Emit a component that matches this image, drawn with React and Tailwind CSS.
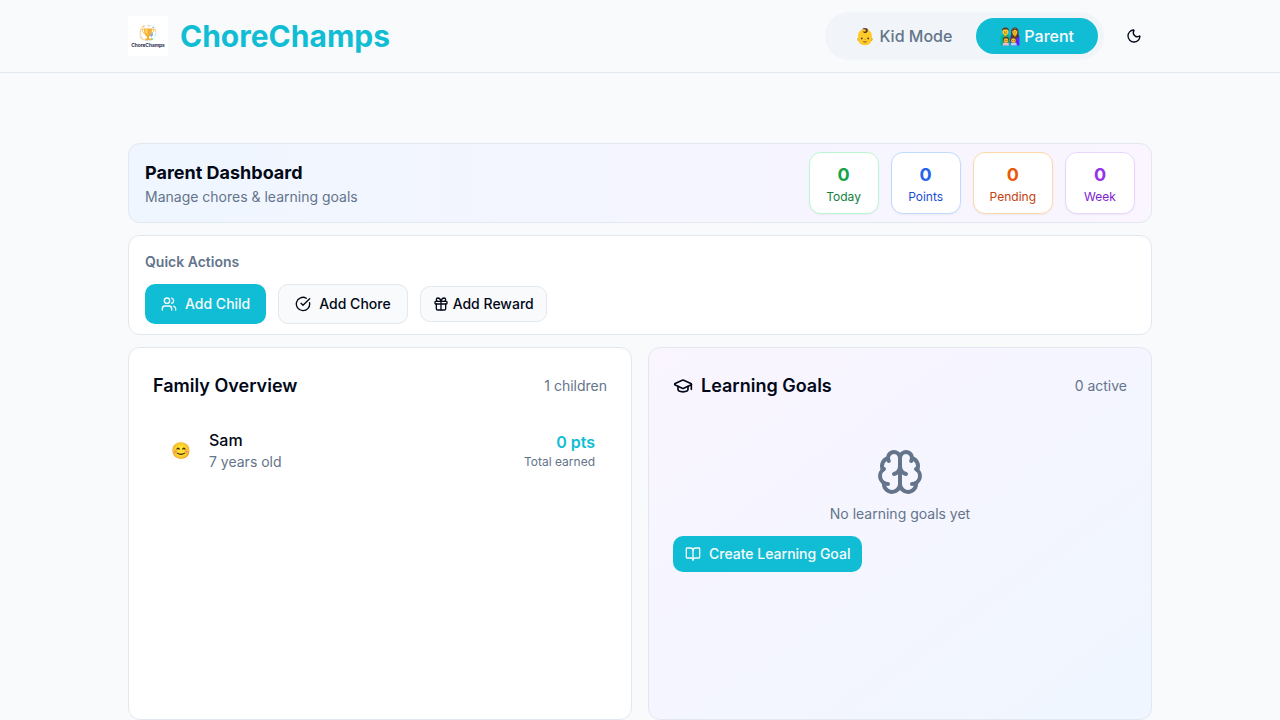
import React from "react";
import { Moon, Users, CircleCheckBig, Gift, GraduationCap, Brain, BookOpen } from "lucide-react";

function Logo() {
  return (
    <svg viewBox="0 0 40 40" className="size-10" role="img" aria-label="ChoreChamps logo">
      <rect width="40" height="40" fill="#ffffff" />
      <circle cx="20" cy="17" r="7.8" fill="none" stroke="#b5daee" strokeWidth="0.8" strokeDasharray="4 2" />
      <path d="M12 16a8 8 0 0 1 3-5M28 16a8 8 0 0 0-2-4M12 20a8 8 0 0 0 4 4" fill="none" stroke="#fad596" strokeWidth="1.2" />
      <path d="M16.5 13.5h-2.3c0 2.6 1 3.8 3 4M23.5 13.5h2.3c0 2.6-1 3.8-3 4" fill="none" stroke="#f8c15c" strokeWidth="1" />
      <path d="M16 12.5h8c0 4.8-1 7.4-3 8.2v1.8h1.8v1.8h-5.6v-1.8h1.8v-1.8c-2-.8-3-3.4-3-8.2z" fill="#f9ae30" />
      <path d="M17.2 13.5h2.2v5.4c-1.3-.8-2.1-2.8-2.2-5.4z" fill="#ffdb80" />
      <path d="M22 19l2.4-3 .8 3-2.2 2.4z" fill="#7fb4dc" />
      <circle cx="23.8" cy="23" r="1.1" fill="#8ccb78" />
      <circle cx="15.5" cy="10.6" r="1" fill="#fbc766" />
      <circle cx="20.5" cy="9.8" r="0.9" fill="#fbd592" />
      <circle cx="25" cy="11.4" r="0.9" fill="#8cc6e8" />
      <circle cx="12.3" cy="18" r="0.8" fill="#fbc766" />
      <text x="20" y="30.6" textAnchor="middle" fontFamily="Inter, sans-serif" fontSize="4.8" fontWeight="700" fill="#1f2b50">
        ChoreChamps
      </text>
    </svg>
  );
}

function Family() {
  return (
    <svg viewBox="0 0 20 20" className="size-5" aria-hidden="true">
      <path d="M.6 19.4v-8.2c0-1.8 1.4-2.6 3-2.6h3.6c1.6 0 2.8.8 2.8 2.6v8.2z" fill="#00b594" />
      <path d="M10.4 19.4v-8.2c0-1.8 1.2-2.6 2.8-2.6h3.4c1.6 0 2.8 1 2.8 2.6v8.2z" fill="#651fff" />
      <path d="M10.8 10.6c.6-1 .3-2.4.3-4.6 0-2.8 1.6-4.4 3.8-4.4s3.8 1.6 3.8 4.4c0 2.2-.2 3.8.3 5.2-1.4 1.4-6.8 1.2-8.2-.6z" fill="#543930" />
      <path d="M4 7.6h2.6v3H4zM13.6 7.6h2.6v3h-2.6z" fill="#e59600" />
      <ellipse cx="5.4" cy="5.6" rx="3" ry="3.4" fill="#ffca28" />
      <ellipse cx="14.9" cy="5.8" rx="2.6" ry="3.2" fill="#ffca28" />
      <path d="M2 5.4C1.6 2.8 3 1.6 5.4 1.6s3.8 1.2 3.4 3.8l-.7-1.5c-1.8-.5-3.6-.5-5.4 0z" fill="#543930" />
      <path d="M12.2 5.2c0-2.2 1.2-2.8 2.7-2.8s2.8.6 2.8 2.8c-1-.3-2-.9-2.8-1.8-.8.9-1.7 1.5-2.7 1.8z" fill="#543930" />
      <path d="M4.2 5.5h.7v.8h-.7zM6.1 5.5h.7v.8h-.7zM13.6 5.6h.7v.8h-.7zM15.6 5.6h.7v.8h-.7z" fill="#404040" />
      <path d="M3.8 7.3c1-.6 2.2-.6 3.2 0z" fill="#543930" />
      <path d="M14 7.6h1.8l-.9.6z" fill="#795548" />
      <path d="M2.8 19.4c0-2.4.8-3.6 2.8-3.6s3.4 1.2 3.4 3.6z" fill="#f6b8d3" />
      <path d="M10.6 19.4c0-2.4 1-3.6 3-3.6s3.2 1.2 3.2 3.6z" fill="#a9d8f5" />
      <circle cx="6" cy="13.8" r="3.1" fill="#543930" />
      <circle cx="13.4" cy="13.8" r="3.1" fill="#543930" />
      <ellipse cx="6" cy="14.6" rx="2.4" ry="2.3" fill="#f7b92e" />
      <ellipse cx="13.4" cy="14.6" rx="2.4" ry="2.3" fill="#f7b92e" />
      <path d="M4.7 14.2h.7v.8h-.7zM6.6 14.2h.7v.8h-.7zM12.1 14.2h.7v.8h-.7zM14 14.2h.7v.8h-.7z" fill="#404040" />
    </svg>
  );
}

const stats = [
  { label: "Today", value: 0, box: "border-[#bbf7d0]", num: "text-[#16a34a]", text: "text-[#15803d]" },
  { label: "Points", value: 0, box: "border-[#bfdbfe]", num: "text-[#2563eb]", text: "text-[#1d4ed8]" },
  { label: "Pending", value: 0, box: "border-[#fed7aa]", num: "text-[#ea580c]", text: "text-[#c2410c]" },
  { label: "Week", value: 0, box: "border-[#e9d5ff]", num: "text-[#9333ea]", text: "text-[#7e22ce]" },
];

export default function App() {
  return (
    <div className="flex min-h-screen flex-col bg-[#f8fafc] font-['Inter',sans-serif] text-[#020817]">
      <header className="border-b border-[#e2e8f0] px-4">
        <div className="mx-auto flex max-w-5xl items-center justify-between py-3">
          <div className="flex items-center gap-3">
            <Logo />
            <h1 className="text-3xl font-bold text-[#11bdd4]">ChoreChamps</h1>
          </div>
          <div className="flex items-center gap-3">
            <div className="flex rounded-full bg-[#f1f5f9] p-1.5 font-medium">
              <button type="button" className="rounded-full px-6 py-1.5 text-[#64748b]">👶 Kid Mode</button>
              <button type="button" className="flex items-center gap-1 rounded-full bg-[#11bdd4] px-6 py-1.5 text-[#f8fafc]">
                <Family />
                Parent
              </button>
            </div>
            <button type="button" aria-label="Toggle theme" className="flex size-9 items-center justify-center">
              <Moon className="size-4" />
            </button>
          </div>
        </div>
      </header>

      <main className="flex flex-1 flex-col px-4 pt-[70px]">
        <div className="mx-auto flex w-full max-w-5xl flex-1 flex-col gap-3">
          <section className="flex items-center justify-between rounded-xl border border-[#e2e8f0] bg-linear-to-r/srgb from-[#eff6ff] to-[#faf5ff] px-4 py-2">
            <div>
              <h2 className="text-lg font-bold">Parent Dashboard</h2>
              <p className="text-sm text-[#64748b]">Manage chores &amp; learning goals</p>
            </div>
            <div className="flex gap-3 text-center">
              {stats.map((s) => (
                <div key={s.label} className={`min-w-[70px] rounded-xl border bg-white px-4 py-2 shadow-xs ${s.box}`}>
                  <div className={`text-lg font-bold ${s.num}`}>{s.value}</div>
                  <div className={`text-xs ${s.text}`}>{s.label}</div>
                </div>
              ))}
            </div>
          </section>

          <section className="rounded-xl border border-[#e2e8f0] bg-white px-4 pt-4 pb-2.5">
            <h3 className="mb-3 text-sm font-semibold text-[#64748b]">Quick Actions</h3>
            <div className="flex items-center gap-3 text-sm font-medium">
              <button type="button" className="flex h-10 items-center gap-2 rounded-[10px] bg-[#11bdd4] px-4 text-[#f8fafc]">
                <Users className="size-4" />
                Add Child
              </button>
              <button type="button" className="flex h-10 items-center gap-2 rounded-[10px] border border-[#e2e8f0] bg-[#f8fafc] px-4">
                <CircleCheckBig className="size-4" />
                Add Chore
              </button>
              <button type="button" className="flex h-9 items-center gap-1 rounded-[10px] border border-[#e2e8f0] bg-[#f8fafc] px-3">
                <Gift className="size-4" />
                Add Reward
              </button>
            </div>
          </section>

          <div className="grid flex-1 grid-cols-2 gap-4">
            <section className="rounded-xl border border-[#e2e8f0] bg-white p-6">
              <div className="mb-4 flex items-center justify-between">
                <h3 className="text-lg font-semibold">Family Overview</h3>
                <span className="text-sm text-[#64748b]">1 children</span>
              </div>
              <div className="flex items-center justify-between p-3">
                <div className="flex items-center gap-3">
                  <span className="flex size-8 items-center justify-center text-base">😊</span>
                  <div>
                    <p className="font-medium">Sam</p>
                    <p className="text-sm text-[#64748b]">7 years old</p>
                  </div>
                </div>
                <div className="text-right">
                  <p className="font-semibold text-[#11bdd4]">0 pts</p>
                  <p className="text-xs text-[#64748b]">Total earned</p>
                </div>
              </div>
            </section>

            <section className="rounded-xl border border-[#e2e8f0] bg-linear-to-br/srgb from-[#faf5ff] to-[#eff6ff] p-6">
              <div className="mb-4 flex items-center justify-between">
                <h3 className="flex items-center gap-2 text-lg font-semibold">
                  <GraduationCap className="size-5" />
                  Learning Goals
                </h3>
                <span className="text-sm text-[#64748b]">0 active</span>
              </div>
              <div className="py-8">
                <Brain className="mx-auto mb-2 size-12 text-[#64748b]" />
                <p className="mb-3 text-center text-sm text-[#64748b]">No learning goals yet</p>
                <button type="button" className="flex h-9 items-center gap-2 rounded-[10px] bg-[#11bdd4] px-3 text-sm font-medium text-[#f8fafc]">
                  <BookOpen className="size-4" />
                  Create Learning Goal
                </button>
              </div>
            </section>
          </div>
        </div>
      </main>
    </div>
  );
}
